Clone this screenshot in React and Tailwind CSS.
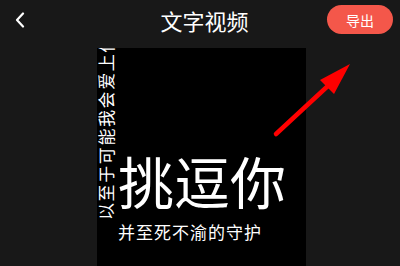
import React from "react";

const font = { fontFamily: '"Noto Sans CJK SC", "Noto Sans", sans-serif' };

const BackIcon = () => (
  <svg width="12" height="16" viewBox="0 0 12 16" fill="none">
    <path d="M9 1.5L3 8l6 6.5" stroke="white" strokeWidth="2.2" strokeLinecap="round" strokeLinejoin="round" />
  </svg>
);

const App = () => {
  return (
    <div
      className="relative w-[400px] h-[266px] overflow-hidden bg-[#181818] text-white flex flex-col font-['Noto_Sans_CJK_SC',sans-serif]"
      style={font}
    >
      {/* Header */}
      <header className="h-[48px] shrink-0 flex items-start pt-[5px]">
        <div className="flex-1 flex items-center h-[29px] pl-[14px]">
          <BackIcon />
        </div>
        <h1 className="h-[29px] flex items-center text-[22px] leading-none pl-[2px]">文字视频</h1>
        <div className="flex-1 flex justify-end pr-[7px]">
          <button className="w-[66px] h-[29px] rounded-full bg-[#f4574a] text-white text-[14px] leading-none flex items-center justify-center">
            导出
          </button>
        </div>
      </header>

      {/* Preview */}
      <div className="flex-1 min-h-0 flex pl-[97px]">
        <div className="w-[209px] h-full bg-black overflow-hidden flex">
          <div className="w-[17px] h-full flex flex-col justify-end pb-[46px]">
            <span className="[writing-mode:vertical-rl] [text-orientation:sideways] rotate-180 whitespace-nowrap text-[17px] leading-none tracking-[1.6px] pl-[1px]">
              以至于可能我会爱上你
            </span>
          </div>
          <div className="flex flex-col pl-[4px] pt-[104px]">
            <p className="text-[56px] leading-none whitespace-nowrap">挑逗你</p>
            <p className="mt-[15px] text-[17px] leading-none tracking-[1px] whitespace-nowrap">并至死不渝的守护</p>
          </div>
        </div>
      </div>

      {/* Red arrow annotation */}
      <svg className="absolute left-0 top-0 pointer-events-none" width="400" height="266">
        <line x1="276" y1="134" x2="330" y2="84" stroke="#ff0000" strokeWidth="4.5" strokeLinecap="round" />
        <polygon points="350,64 320,80 334,94" fill="#ff0000" />
      </svg>
    </div>
  );
};

export default App;
